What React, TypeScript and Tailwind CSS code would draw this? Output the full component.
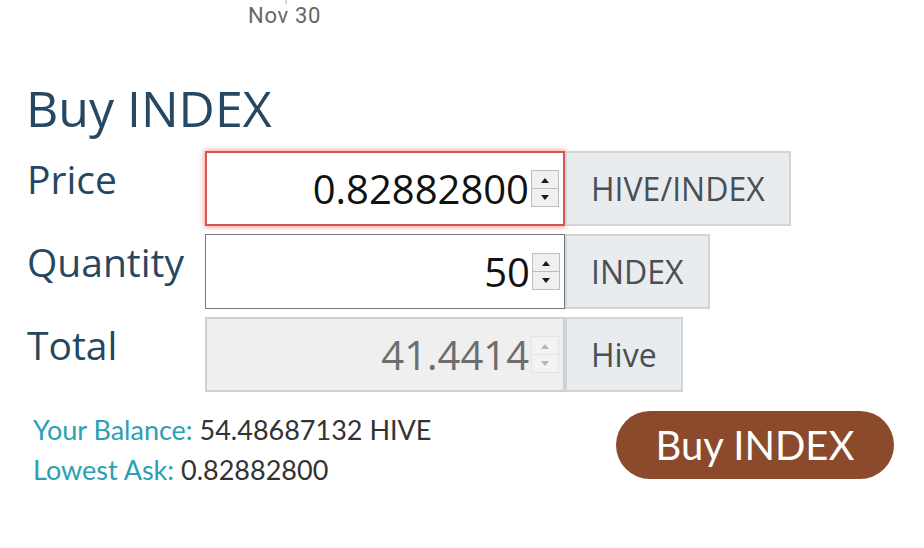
import React from "react";

function Spinner({ disabled }: { disabled?: boolean }) {
  const arrow = disabled ? "#b5b5b5" : "#1a1a1a";
  const border = disabled ? "border-[#e3e3e3]" : "border-[#bdbdbd]";
  const bg = disabled ? "bg-[#f3f3f3]" : "bg-[#f0f0f0]";
  return (
    <div className={`flex flex-col w-[28px] h-[37px] border ${border} ${bg}`}>
      <div className={`flex-1 flex items-center justify-center border-b ${border}`}>
        <svg width="10" height="6" viewBox="0 0 10 6"><path d="M1 6 L5 1 L9 6 Z" fill={arrow} /></svg>
      </div>
      <div className="flex-1 flex items-center justify-center">
        <svg width="10" height="6" viewBox="0 0 10 6"><path d="M1 0 L5 5 L9 0 Z" fill={arrow} /></svg>
      </div>
    </div>
  );
}

function Row({
  label,
  value,
  addon,
  variant,
}: {
  label: string;
  value: string;
  addon: string;
  variant: "focus" | "normal" | "disabled";
}) {
  const box =
    variant === "focus"
      ? "border-2 border-[#d9534f] bg-white shadow-[0_0_5px_1px_rgba(233,80,80,0.55)]"
      : variant === "normal"
      ? "border border-[#767676] bg-white"
      : "border-2 border-[#d0d0d0] bg-[#efefef]";
  const text = variant === "disabled" ? "text-[#6d6d6d]" : "text-[#111]";
  return (
    <div className="flex items-start h-[75px]">
      <div className="w-[178px] text-[39px] leading-none pt-[8px] text-[#254761]">{label}</div>
      <div className={`w-[360px] h-[75px] flex items-center justify-end pr-[4px] ${box}`}>
        <span className={`text-[40px] leading-none mr-[2px] ${text}`}>{value}</span>
        <Spinner disabled={variant === "disabled"} />
      </div>
      <div className="h-[75px] flex items-center px-[24px] bg-[#e9ecef] border-2 border-[#d2d5d8] text-[32px] text-[#4a4f54] leading-none">
        {addon}
      </div>
    </div>
  );
}

export default function App() {
  return (
    <div
      className="w-[924px] h-[548px] bg-white overflow-hidden relative"
      style={{ fontFamily: '"Open Sans", "Noto Sans", sans-serif' }}
    >
      <div className="absolute left-[285px] top-0 w-[2px] h-[4px] bg-[#d6d6d6]" />
      <div
        className="pl-[248px] pt-[4px] text-[22px] leading-[24px] text-[#666] tracking-[0.7px]"
        style={{ fontFamily: 'Roboto, "Liberation Sans", sans-serif' }}
      >
        Nov 30
      </div>
      <div className="px-[27px]">
        <h2 className="mt-[56px] -ml-[1px] text-[50px] leading-[48px] text-[#264863]">Buy INDEX</h2>
        <div className="mt-[19px] flex flex-col gap-[8px]">
          <Row label="Price" value="0.82882800" addon="HIVE/INDEX" variant="focus" />
          <Row label="Quantity" value="50" addon="INDEX" variant="normal" />
          <Row label="Total" value="41.4414" addon="Hive" variant="disabled" />
        </div>
        <div className="mt-[18px] flex items-start justify-between pl-[6px] pr-[3px]" style={{ fontFamily: 'Lato, sans-serif' }}>
          <div className="text-[27px] leading-[40px]">
            <div>
              <span className="text-[#2ba0b4]">Your Balance:</span>{" "}
              <span className="text-[#333]">54.48687132 HIVE</span>
            </div>
            <div>
              <span className="text-[#2ba0b4]">Lowest Ask:</span>{" "}
              <span className="text-[#333]">0.82882800</span>
            </div>
          </div>
          <button className="mt-[1px] w-[278px] h-[68px] rounded-full bg-[#8b4a2b] text-white text-[40px] leading-none">
            Buy INDEX
          </button>
        </div>
      </div>
    </div>
  );
}
